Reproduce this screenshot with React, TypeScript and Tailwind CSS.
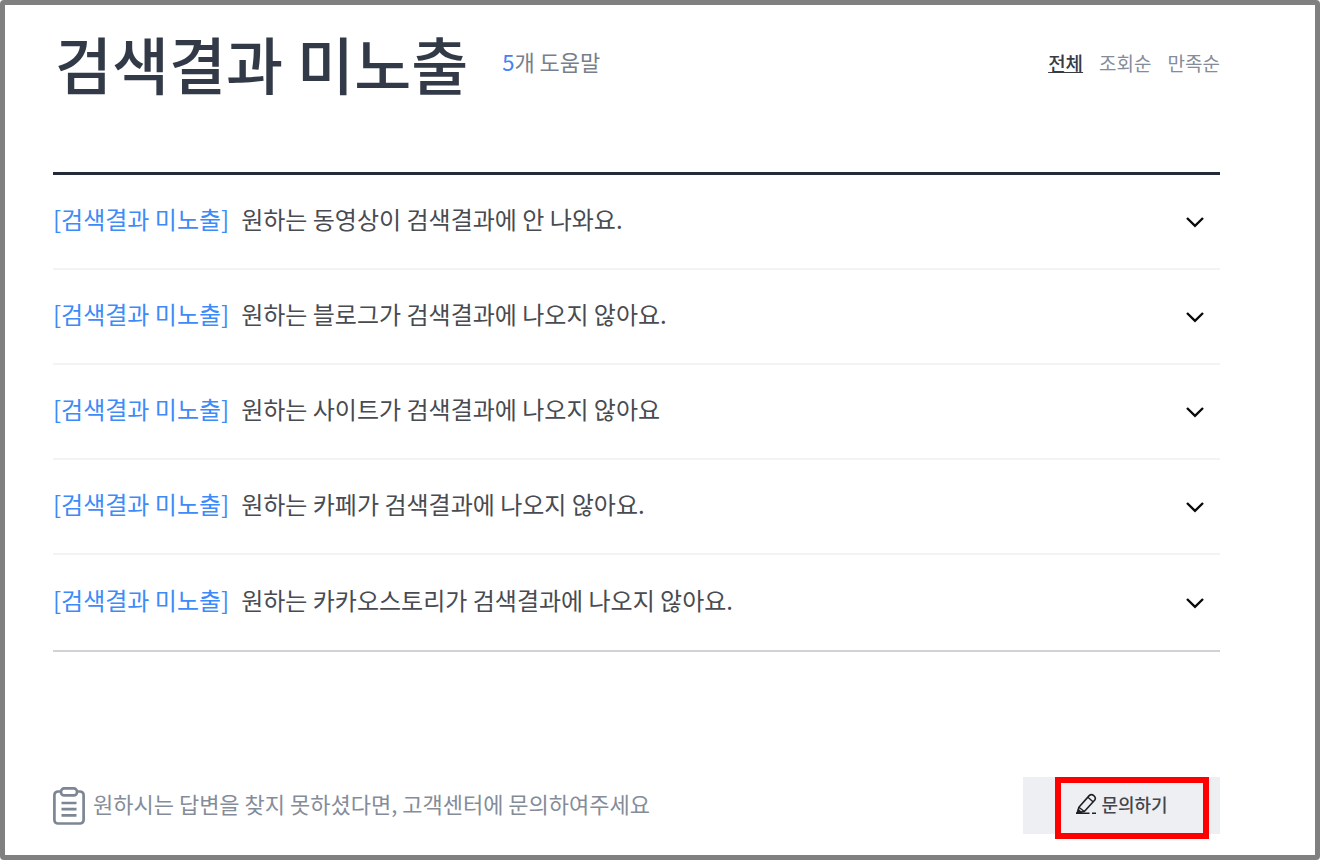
const questions: string[] = [
  "원하는 동영상이 검색결과에 안 나와요.",
  "원하는 블로그가 검색결과에 나오지 않아요.",
  "원하는 사이트가 검색결과에 나오지 않아요",
  "원하는 카페가 검색결과에 나오지 않아요.",
  "원하는 카카오스토리가 검색결과에 나오지 않아요.",
];

function ChevronIcon() {
  return (
    <svg className="mr-4 h-3 w-[18px] shrink-0" viewBox="0 0 18 12" fill="none" aria-hidden="true">
      <path d="M1 2L9 9.8L17 2" stroke="#0a0a0a" strokeWidth="2.4" />
    </svg>
  );
}

function ClipboardIcon() {
  return (
    <svg className="h-[38px] w-8 shrink-0" viewBox="0 0 32 38" fill="none" stroke="#7d8694" strokeWidth="2.7" aria-hidden="true">
      <path d="M8 4.5H5a3.6 3.6 0 0 0-3.6 3.6v24.8A3.6 3.6 0 0 0 5 36.5h22a3.6 3.6 0 0 0 3.6-3.6V8.1A3.6 3.6 0 0 0 27 4.5h-3" />
      <rect x="8" y="1.4" width="16" height="7" rx="3.2" />
      <path d="M8.500 16h15M8.500 22.200h15M8.500 28.400h15" />
    </svg>
  );
}

function PencilIcon() {
  return (
    <svg className="h-[22px] w-[22px] shrink-0" viewBox="0 0 22 22" fill="none" stroke="#1f2024" strokeWidth="1.600" strokeLinejoin="round" aria-hidden="true">
      <path d="M2.400 19.800L3.900 14.200L14.200 2.600Q16.300 0.700 18.800 2.600Q21.300 4.800 19.800 7L9.300 18.500Z" />
      <path d="M12.900 4.200L18.300 9M3.900 14.200L9.300 18.500" strokeWidth="1.400" />
      <path d="M1.200 20.600L3.100 15.600L7.200 19.200L6.500 20.600Z" fill="#1f2024" stroke="none" />
      <path d="M1 20.300H14.500M17 20.300H21" />
    </svg>
  );
}

export default function App() {
  return (
    <div className="bg-white font-['Noto_Sans_CJK_KR',sans-serif]">
      <main className="flex min-h-screen flex-col rounded-sm border-[5px] border-[#808080] bg-white pr-[95px] pl-12">
        <header className="flex items-start justify-between pt-3 pl-0.5">
          <div className="flex items-start gap-[34px]">
            <h1 className="text-[62px] leading-[92px] font-medium text-[#333a47]">검색결과 미노출</h1>
            <p className="pt-7 text-[22px] leading-[32px] text-[#777f8c]">
              <span className="text-[#4480f8]">5</span>개 도움말
            </p>
          </div>
          <nav className="flex gap-4 pt-8 text-[19px] leading-[28px] text-[#858c99]" aria-label="정렬">
            <button type="button" aria-pressed="true" className="font-medium text-[#383b42] underline underline-offset-1">
              전체
            </button>
            <button type="button" aria-pressed="false">조회순</button>
            <button type="button" aria-pressed="false">만족순</button>
          </nav>
        </header>

        <ul className="mt-[63px] border-t-[3px] border-b-2 border-t-[#252a38] border-b-[#d1d2d7]">
          {questions.map((question) => (
            <li key={question} className="flex min-h-[95px] border-b-2 border-[#f3f3f4] last:border-b-0">
              <button type="button" aria-expanded="false" className="flex w-full items-center justify-between text-left text-[24px] leading-[36px] text-[#484b51]">
                <span className="flex gap-3 pb-1.5">
                  <span className="text-[#3d8bf8]">[검색결과 미노출]</span>
                  <span>{question}</span>
                </span>
                <ChevronIcon />
              </button>
            </li>
          ))}
        </ul>

        <footer className="mt-auto mb-[21px] flex items-center justify-between">
          <div className="flex items-center gap-2 text-[22px] leading-[34px] text-[#858c99]">
            <ClipboardIcon />
            <p className="pb-1.5">원하시는 답변을 찾지 못하셨다면, 고객센터에 문의하여주세요</p>
          </div>
          <div className="relative">
            <a href="#inquiry" className="flex h-[57px] w-[197px] items-center justify-center gap-1 bg-[#eeeff2] pb-1 text-[18px] leading-[28px] font-medium text-[#43464d]">
              <PencilIcon />
              문의하기
            </a>
            <div className="pointer-events-none absolute top-0 left-8 h-[62px] w-[154px] border-[6px] border-[#ff0000]" />
          </div>
        </footer>
      </main>
    </div>
  );
}
